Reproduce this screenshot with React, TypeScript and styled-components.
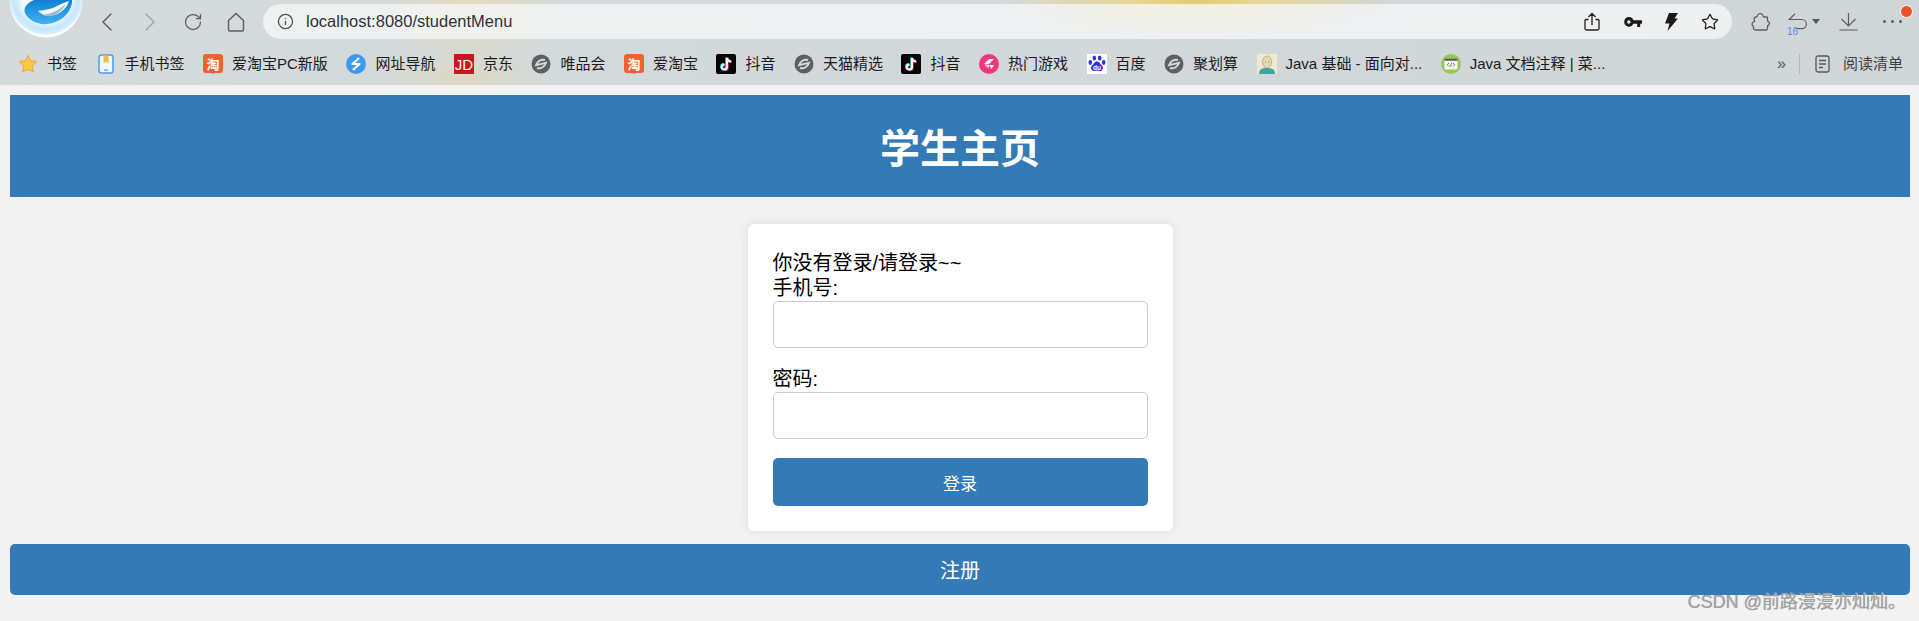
import React from "react";
import styled, { createGlobalStyle } from "styled-components";
import { ChevronLeft, ChevronRight, RotateCw, Info, Star } from "lucide-react";

const Global = createGlobalStyle`
  html, body { margin: 0; padding: 0; height: 100%; overflow: hidden; background: #f2f2f2; }
  body { font-family: "Liberation Sans", "Noto Sans CJK SC", sans-serif; color: #000; }
  * { box-sizing: border-box; }
`;

const Root = styled.div`
  position: relative;
  width: 1919px;
  height: 621px;
  overflow: hidden;
`;

const BrowserChrome = styled.header`
  position: relative;
  height: 85px;
  background:
    radial-gradient(ellipse 200px 44px at 1195px -6px, #e2c455 0%, rgba(236, 214, 130, .8) 35%, rgba(226, 220, 180, 0) 100%),
    radial-gradient(ellipse 90px 70px at 470px 2px, rgba(228, 220, 185, .85) 0%, rgba(220, 218, 195, 0) 100%),
    radial-gradient(ellipse 90px 36px at 465px 85px, rgba(222, 216, 188, .85) 0%, rgba(220, 214, 190, 0) 100%),
    linear-gradient(90deg, #d5dadb 0%, #d2d8da 60%, #d0d5d7 100%);
`;

const Logo = styled.svg`
  position: absolute;
  left: 9px;
  top: -36px;
  width: 74px;
  height: 74px;
`;

const Toolbar = styled.div`
  display: flex;
  align-items: center;
  height: 43px;
  padding-left: 96px;
`;

const NavButton = styled.span<{ $dim?: boolean }>`
  display: flex;
  align-items: center;
  justify-content: center;
  width: 22px;
  height: 22px;
  margin-right: 21px;
  color: ${(p) => (p.$dim ? "#a3a8aa" : "#5c5f61")};
  svg { flex: none; }
`;

const AddressBar = styled.div`
  display: flex;
  align-items: center;
  width: 1469px;
  height: 35px;
  margin-left: -5px;
  padding: 0 13px 0 14px;
  border-radius: 18px;
  background: rgba(245, 246, 246, 0.8);
`;

const Url = styled.span`
  margin-left: 12px;
  font-size: 16.5px;
  color: #303334;
`;

const AddressActions = styled.div`
  display: flex;
  align-items: center;
  gap: 23px;
  margin-left: auto;
`;

const ToolActions = styled.div`
  position: relative;
  display: flex;
  align-items: center;
  margin-left: 19px;
  color: #5c5f61;
`;

const UndoBox = styled.span`
  position: relative;
  display: flex;
  align-items: center;
  margin: 0 19px 0 18px;
`;

const UndoCount = styled.span`
  position: absolute;
  left: -1px;
  top: 13px;
  font-size: 10px;
  color: #4a90e2;
`;

const Caret = styled.span`
  width: 0;
  height: 0;
  margin-left: 5px;
  border-left: 4px solid transparent;
  border-right: 4px solid transparent;
  border-top: 5px solid #555;
`;

const Dots = styled.span`
  display: flex;
  gap: 5px;
  margin-left: 25px;
`;

const Dot = styled.span`
  width: 3px;
  height: 3px;
  border-radius: 50%;
  background: #5c5f61;
`;

const Badge = styled.span`
  position: absolute;
  right: -11px;
  top: -7px;
  width: 13px;
  height: 13px;
  border: 1px solid #fff;
  border-radius: 50%;
  background: #ee4f2b;
`;

const BookmarkBar = styled.nav`
  display: flex;
  align-items: center;
  height: 42px;
  padding: 0 16px 0 18px;
  gap: 18.5px;
`;

const Bookmark = styled.span`
  display: inline-flex;
  align-items: center;
  gap: 9px;
  font-size: 15px;
  line-height: 20px;
  color: #1b1b1b;
  white-space: nowrap;
`;

const Favicon = styled.svg`
  display: block;
  flex: none;
  width: 20px;
  height: 20px;
`;

const BarEnd = styled.div`
  display: flex;
  align-items: center;
  margin-left: auto;
`;

const More = styled.span`
  font-size: 16px;
  color: #555;
  margin-right: 13px;
`;

const Divider = styled.span`
  width: 1px;
  height: 20px;
  margin-right: 15px;
  background: #b5babc;
`;

const Reader = styled(Bookmark)`
  gap: 13px;
  color: #3d4042;
`;

const Page = styled.main`
  padding: 10px 9px 0 10px;
`;

const Banner = styled.div`
  display: flex;
  align-items: center;
  justify-content: center;
  height: 102px;
  background: #337ab7;
`;

const Title = styled.h1`
  margin: 0;
  font-size: 40px;
  font-weight: 700;
  color: #fff;
`;

const Card = styled.form`
  width: 425px;
  margin: 27px auto 13px;
  padding: 26px 25px 25px;
  background: #fff;
  border-radius: 6px;
  box-shadow: 0 0 10px rgba(0, 0, 0, 0.1);
  font-size: 20px;
  line-height: 26px;
`;

const Field = styled.label`
  display: block;
  margin-bottom: 19px;
  line-height: 25px;
`;

const Input = styled.input`
  display: block;
  width: 100%;
  height: 47px;
  padding: 0 10px;
  border: 1px solid #ccc;
  border-radius: 5px;
  background: #fff;
  outline: none;
`;

const Button = styled.button<{ $large?: boolean }>`
  display: block;
  width: 100%;
  height: ${(p) => (p.$large ? 51 : 48)}px;
  padding: 0;
  border: 0;
  border-radius: 5px;
  background: #337ab7;
  color: #fff;
  font-family: inherit;
  font-size: ${(p) => (p.$large ? 20 : 17)}px;
`;

const Watermark = styled.span`
  position: absolute;
  right: 13px;
  top: 590px;
  font-size: 18px;
  line-height: 24px;
  color: #a2a2a2;
  text-shadow: 1px 1px 1px rgba(255, 255, 255, 0.6), 0 0 1px #8a8a8a;
  white-space: nowrap;
`;

const cjk = '"Noto Sans CJK SC", sans-serif';

const Tao = () => (
  <Favicon viewBox="0 0 20 20">
    <path d="M3 0h14a3 3 0 0 1 3 3v13a3 3 0 0 1-3 3h-5l-2 1-2-1H3a3 3 0 0 1-3-3V3a3 3 0 0 1 3-3z" fill="#f0622d" />
    <text x="10" y="14.500" textAnchor="middle" fontSize="13" fontWeight="700" fill="#fff" fontFamily={cjk}>淘</text>
  </Favicon>
);
const Tiktok = () => (
  <Favicon viewBox="0 0 20 20">
    <rect width="20" height="20" rx="2" fill="#050505" />
    <path d="M11 4v9a2.600 2.600 0 1 1-2.600-2.600M11 4c.4 2.200 1.800 3.400 4 3.600" fill="none" stroke="#25f4ee" strokeWidth="2" transform="translate(-.7 -.5)" />
    <path d="M11 4v9a2.600 2.600 0 1 1-2.600-2.600M11 4c.4 2.200 1.800 3.400 4 3.600" fill="none" stroke="#fe2c55" strokeWidth="2" transform="translate(.7 .5)" />
    <path d="M11 4v9a2.600 2.600 0 1 1-2.600-2.600M11 4c.4 2.200 1.800 3.400 4 3.600" fill="none" stroke="#fff" strokeWidth="2" />
  </Favicon>
);
const Ball = () => (
  <Favicon viewBox="0 0 20 20">
    <circle cx="10" cy="10" r="9.500" fill="#5d5f60" />
    <path d="M14 6C10 4.800 6.200 7.500 5 11.200L15 8.800C13.800 12.500 10 15.200 6 14" fill="none" stroke="#d5dadb" strokeWidth="1.900" />
  </Favicon>
);

const icons: Record<string, React.ReactNode> = {
  star: (
    <Favicon viewBox="0 0 20 20">
      <path d="M10 1.500l2.700 5.400 6 .9-4.400 4.200 1.100 6L10 15.200 4.600 18l1.100-6L1.300 7.800l6-.9z" fill="#fbc93d" stroke="#f0a63a" strokeWidth="1" />
    </Favicon>
  ),
  phone: (
    <Favicon viewBox="0 0 20 20">
      <rect x="3" y="1" width="14" height="18" rx="2.500" fill="#f3f8ff" stroke="#4a9cf0" strokeWidth="1.500" />
      <path d="M7.500 1.500h5v8l-2.500-2-2.500 2z" fill="#f5b942" />
      <rect x="8" y="15.500" width="4" height="1.200" fill="#4a9cf0" />
    </Favicon>
  ),
  tao: <Tao />,
  nav: (
    <Favicon viewBox="0 0 20 20">
      <circle cx="10" cy="10" r="10" fill="#3d9bef" />
      <path d="M13 4L6.500 10H10M7 16l6.500-6H10" fill="none" stroke="#fff" strokeWidth="2.200" strokeLinejoin="round" />
    </Favicon>
  ),
  jd: (
    <Favicon viewBox="0 0 20 20">
      <rect width="20" height="20" fill="#c8161d" />
      <text x="10" y="15.500" textAnchor="middle" fontSize="15" fill="#fff" fontFamily="Liberation Sans, sans-serif">JD</text>
    </Favicon>
  ),
  ball: <Ball />,
  tiktok: <Tiktok />,
  game: (
    <Favicon viewBox="0 0 20 20">
      <circle cx="10" cy="10" r="10" fill="#f0367f" />
      <path d="M5 10l5-5h5l-5 5zM10 11h5l-2.500 4z" fill="#fff" />
      <path d="M5 10.500l5 0 0 4z" fill="#ffd0e0" />
    </Favicon>
  ),
  baidu: (
    <Favicon viewBox="0 0 20 20">
      <rect width="20" height="20" fill="#fff" />
      <g fill="#2932e1">
        <ellipse cx="7.300" cy="4" rx="1.800" ry="2.500" />
        <ellipse cx="12.700" cy="4" rx="1.800" ry="2.500" />
        <ellipse cx="3.300" cy="8.500" rx="1.800" ry="2.400" />
        <ellipse cx="16.700" cy="8.500" rx="1.800" ry="2.400" />
        <path d="M10 7.500c2.500 0 3 2.500 5 4 2 2 .5 6-2.500 5.500-1-.2-1.800-.5-2.500-.5s-1.500.3-2.500.5C4.500 17.500 3 13.500 5 11.500c2-1.500 2.500-4 5-4z" />
      </g>
      <text x="10" y="15.800" textAnchor="middle" fontSize="6.500" fontWeight="700" fill="#fff" fontFamily="Liberation Sans, sans-serif">du</text>
    </Favicon>
  ),
  avatar: (
    <Favicon viewBox="0 0 20 20">
      <rect width="20" height="20" fill="#f1e9cb" />
      <path d="M2 20c0-5 3-6 8-6s8 1 8 6z" fill="#3fa6a0" />
      <ellipse cx="10" cy="8" rx="4.500" ry="6" fill="#e5d9b4" stroke="#a9a58c" strokeWidth=".8" />
      <path d="M8 8h1M11 8h1M10 14v4" stroke="#8b8367" strokeWidth=".8" />
    </Favicon>
  ),
  doc: (
    <Favicon viewBox="0 0 20 20">
      <circle cx="10" cy="10" r="10" fill="#97c74f" />
      <rect x="3.500" y="4.500" width="13" height="11" rx="1" fill="#f2f6ea" />
      <rect x="3.500" y="4.500" width="13" height="2.200" fill="#4d5a55" />
      <path d="M8 9l-1.700 1.700L8 12.400M12 9l1.700 1.700L12 12.400M10.700 8.800l-1.400 4" fill="none" stroke="#4d5a55" strokeWidth=".8" />
    </Favicon>
  ),
};

const bookmarks: [string, string][] = [
  ["star", "书签"],
  ["phone", "手机书签"],
  ["tao", "爱淘宝PC新版"],
  ["nav", "网址导航"],
  ["jd", "京东"],
  ["ball", "唯品会"],
  ["tao", "爱淘宝"],
  ["tiktok", "抖音"],
  ["ball", "天猫精选"],
  ["tiktok", "抖音"],
  ["game", "热门游戏"],
  ["baidu", "百度"],
  ["ball", "聚划算"],
  ["avatar", "Java 基础 - 面向对..."],
  ["doc", "Java 文档注释 | 菜..."],
];

export default function App() {
  return (
    <Root>
      <Global />
      <BrowserChrome>
        <Logo viewBox="9 -36 74 74">
          <defs>
            <radialGradient id="halo" cx="50%" cy="45%" r="52%">
              <stop offset="60%" stopColor="#f4fbff" />
              <stop offset="85%" stopColor="#c5e6fb" />
              <stop offset="96%" stopColor="#d8effc" />
              <stop offset="100%" stopColor="#ffffff" />
            </radialGradient>
            <linearGradient id="orb" x1="0" y1="0" x2="0" y2="1">
              <stop offset="0%" stopColor="#1180d4" />
              <stop offset="100%" stopColor="#3fb2ee" />
            </linearGradient>
          </defs>
          <circle cx="46" cy="1" r="36.500" fill="url(#halo)" />
          <path d="M34 0C27 3 23 8 25 13C28 20 38 25 47 24C60 23 70 14 72 3L72 0Z" fill="url(#orb)" />
          <path d="M38 11C45 10 52 9 57 6C61 4 65 2 69 1C67 8 60 15 50 16C45 16 41 14 38 11Z" fill="#f4f8fb" />
          <path d="M44 14.500C52 14 60 9 66 4C62 11 56 16 50 16C48 16 46 15.500 44 14.500Z" fill="#9dbbd8" />
        </Logo>
        <Toolbar>
          <NavButton><ChevronLeft size={32} strokeWidth={1.1} /></NavButton>
          <NavButton $dim><ChevronRight size={32} strokeWidth={1.1} /></NavButton>
          <NavButton><RotateCw size={20} strokeWidth={1.5} /></NavButton>
          <NavButton>
            <svg width="20" height="20" viewBox="0 0 20 20" fill="none" stroke="currentColor" strokeWidth="1.500">
              <path d="M2.500 8.500L10 1.500l7.500 7v9a1.500 1.500 0 0 1-1.500 1.500H4a1.500 1.500 0 0 1-1.500-1.500z" strokeLinejoin="round" />
            </svg>
          </NavButton>
          <AddressBar>
            <Info size={17} strokeWidth={1.8} color="#4b4e50" />
            <Url>localhost:8080/studentMenu</Url>
            <AddressActions>
              <svg width="18" height="19" viewBox="0 0 18 19" fill="none" stroke="#1f1f1f" strokeWidth="1.300">
                <path d="M5.500 7.500H3a1 1 0 0 0-1 1v8a1.500 1.500 0 0 0 1.500 1.500h11a1.500 1.500 0 0 0 1.500-1.500v-8a1 1 0 0 0-1-1h-2.500M9 13V1.500M5.500 5L9 1.500 12.500 5" strokeLinejoin="round" />
              </svg>
              <svg width="18" height="10" viewBox="0 0 18 10" fill="#1a1a1a">
                <path d="M4.800 0a4.800 4.800 0 0 1 4.600 3.200H18V6.800h-1.800V10h-3V6.800H9.400A4.800 4.800 0 1 1 4.800 0zm0 3.200a1.800 1.800 0 1 0 0 3.600 1.800 1.800 0 0 0 0-3.600z" fillRule="evenodd" />
              </svg>
              <svg width="13" height="18" viewBox="0 0 13 18" fill="#1a1a1a">
                <path d="M4 0h9L9.500 5.500H13L2.500 18l2-7.500H0z" />
              </svg>
              <Star size={18} strokeWidth={1.7} color="#1f1f1f" />
            </AddressActions>
          </AddressBar>
          <ToolActions>
            <svg width="19" height="19" viewBox="0 0 19 19" fill="none" stroke="currentColor" strokeWidth="1.300">
              <path d="M6.500 3.500C7.500 .8 11.500 1 12 3.800c.1.600.3 1 .9 1.200h2.600c.6 0 1 .5 1 1v2.400c0 .6.300 1 .8 1.200 1.500.8 1.500 3.400-.3 3.900-.4.100-.5.400-.5.800v2.300c0 .8-.5 1.400-1.300 1.400H4.500c-1.500 0-2.500-1.300-2-2.600.3-.7-.1-1.200-.6-1.600-1.500-1.200-.8-3.700 1-3.900.6-.1.800-.6.600-1.100C2.800 6.500 3.500 5 5 5c.8 0 1.200-.6 1.500-1.500z" strokeLinejoin="round" />
            </svg>
            <UndoBox>
              <svg width="19" height="17" viewBox="0 0 19 17" fill="none" stroke="currentColor" strokeWidth="1.200">
                <path d="M7 .8L1.200 6.500h12.600a4.600 4.600 0 0 1 0 9.200H7.500" />
              </svg>
              <UndoCount>16</UndoCount>
              <Caret />
            </UndoBox>
            <svg width="19" height="18" viewBox="0 0 19 18" fill="none" stroke="currentColor" strokeWidth="1.200">
              <path d="M9.500 0v12.500M2.500 6l7 7 7-7M.5 17h18" />
            </svg>
            <Dots><Dot /><Dot /><Dot /></Dots>
            <Badge />
          </ToolActions>
        </Toolbar>
        <BookmarkBar>
          {bookmarks.map(([icon, label], i) => (
            <Bookmark key={i}>
              {icons[icon]}
              {label}
            </Bookmark>
          ))}
          <BarEnd>
            <More>»</More>
            <Divider />
            <Reader>
              <svg width="15" height="18" viewBox="0 0 15 18" fill="none" stroke="#55585a" strokeWidth="1.300">
                <rect x="1" y="1" width="13" height="16" rx="2" />
                <path d="M4 5.500h7M4 9h7M4 12.500h4" />
              </svg>
              阅读清单
            </Reader>
          </BarEnd>
        </BookmarkBar>
      </BrowserChrome>
      <Page>
        <Banner>
          <Title>学生主页</Title>
        </Banner>
        <Card onSubmit={(e) => e.preventDefault()}>
          <div>你没有登录/请登录~~</div>
          <Field>
            手机号:
            <Input type="text" />
          </Field>
          <Field>
            密码:
            <Input type="password" />
          </Field>
          <Button type="submit">登录</Button>
        </Card>
        <Button $large type="button">注册</Button>
      </Page>
      <Watermark>CSDN @前路漫漫亦灿灿。</Watermark>
    </Root>
  );
}
